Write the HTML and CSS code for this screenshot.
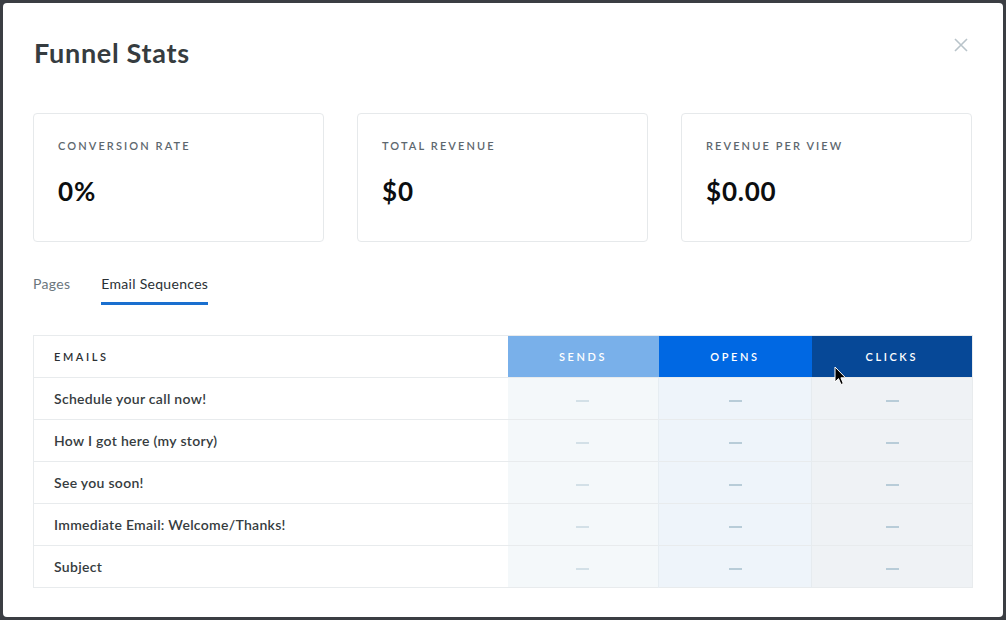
FILE: index.html
```html
<!DOCTYPE html>
<html lang="en">
  <head>
    <meta charset="utf-8">
    <title>Funnel Stats</title>
    <link rel="stylesheet" href="styles.css">
  </head>
  <body>
    <div class="modal">
      <div class="modal__header">
        <h1 class="modal__title">Funnel Stats</h1>
        <button class="modal__close" aria-label="Close">
          <svg width="14" height="14" viewBox="0 0 14 14">
            <path d="M1 1L13 13M13 1L1 13" stroke="#b9c4ca" stroke-width="1.6" fill="none"/>
          </svg>
        </button>
      </div>

      <div class="stats">
        <div class="stat">
          <p class="stat__label">Conversion Rate</p>
          <p class="stat__value">0%</p>
        </div>
        <div class="stat">
          <p class="stat__label">Total Revenue</p>
          <p class="stat__value">$0</p>
        </div>
        <div class="stat">
          <p class="stat__label">Revenue Per View</p>
          <p class="stat__value">$0.00</p>
        </div>
      </div>

      <ul class="tabs">
        <li class="tab">Pages</li>
        <li class="tab tab--active">Email Sequences</li>
      </ul>

      <table class="emails">
        <colgroup>
          <col class="col-name">
          <col class="col-sends">
          <col class="col-opens">
          <col class="col-clicks">
        </colgroup>
        <thead>
          <tr>
            <th class="th-name">Emails</th>
            <th class="th-sends">Sends</th>
            <th class="th-opens">Opens</th>
            <th class="th-clicks">Clicks</th>
          </tr>
        </thead>
        <tbody>
          <tr>
            <td class="name">Schedule your call now!</td>
            <td class="sends"><span class="dash"></span></td>
            <td class="opens"><span class="dash"></span></td>
            <td class="clicks"><span class="dash"></span></td>
          </tr>
          <tr>
            <td class="name">How I got here (my story)</td>
            <td class="sends"><span class="dash"></span></td>
            <td class="opens"><span class="dash"></span></td>
            <td class="clicks"><span class="dash"></span></td>
          </tr>
          <tr>
            <td class="name">See you soon!</td>
            <td class="sends"><span class="dash"></span></td>
            <td class="opens"><span class="dash"></span></td>
            <td class="clicks"><span class="dash"></span></td>
          </tr>
          <tr>
            <td class="name">Immediate Email: Welcome/Thanks!</td>
            <td class="sends"><span class="dash"></span></td>
            <td class="opens"><span class="dash"></span></td>
            <td class="clicks"><span class="dash"></span></td>
          </tr>
          <tr>
            <td class="name">Subject</td>
            <td class="sends"><span class="dash"></span></td>
            <td class="opens"><span class="dash"></span></td>
            <td class="clicks"><span class="dash"></span></td>
          </tr>
        </tbody>
      </table>
    </div>

    <svg class="cursor" width="13" height="20" viewBox="0 0 13 20">
      <path d="M1 1L1 16L4.5 12.6L7 18.5L9.3 17.5L6.9 11.8L11.6 11.8Z" fill="#000" stroke="#fff" stroke-width="1"/>
    </svg>
  </body>
</html>
```

FILE: styles.css
```css
html, body {
  margin: 0;
  padding: 0;
}

body {
  width: 1006px;
  height: 620px;
  padding: 3px;
  box-sizing: border-box;
  background-color: #3b3e43;
  font-family: Lato, "Open Sans", Arial, sans-serif;
  color: #33393d;
}

.modal {
  width: 1000px;
  height: 614px;
  box-sizing: border-box;
  padding: 30px 31px 0 30px;
  background-color: #fff;
  border-radius: 4px;
}

.modal__header {
  display: flex;
  justify-content: space-between;
  align-items: flex-start;
}

.modal__title {
  margin: 0;
  font-size: 27px;
  line-height: 40px;
  font-weight: 700;
  letter-spacing: 0.7px;
  color: #363c40;
  padding-left: 1px;
}

.modal__close {
  margin: 5px 4px 0 0;
  padding: 0;
  border: 0;
  background: none;
  width: 14px;
  height: 14px;
  display: flex;
}

.stats {
  display: grid;
  grid-template-columns: repeat(3, 1fr);
  gap: 33px;
  margin-top: 40px;
}

.stat {
  height: 129px;
  box-sizing: border-box;
  padding: 25px 24px 0;
  border: 1px solid #e6e9eb;
  border-radius: 4px;
}

.stat__label {
  margin: 0;
  font-size: 11px;
  line-height: 14px;
  letter-spacing: 2.1px;
  text-transform: uppercase;
  color: #5d676e;
  font-weight: 600;
}

.stat__value {
  margin: 23px 0 0;
  font-size: 26px;
  line-height: 30px;
  font-weight: 700;
  letter-spacing: 0.8px;
  color: #0c0e10;
}

.tabs {
  display: flex;
  gap: 31px;
  list-style-type: none;
  margin: 32px 0 0;
  padding: 0;
}

.tab {
  font-size: 14px;
  line-height: 20px;
  letter-spacing: 0.3px;
  padding-bottom: 8px;
  border-bottom: 3px solid transparent;
  color: #6b767d;
}

.tab--active {
  color: #2a3034;
  border-bottom-color: #1a6fcf;
}

.emails {
  width: 940px;
  margin-top: 30px;
  border-collapse: collapse;
  table-layout: fixed;
  border: 1px solid #e8ebed;
}

.col-name { width: 474px; }
.col-sends { width: 151px; }
.col-opens { width: 153px; }
.col-clicks { width: 161px; }

.emails th {
  height: 41px;
  padding: 0;
  font-size: 11px;
  font-weight: 600;
  letter-spacing: 2.6px;
  text-transform: uppercase;
  color: #fff;
  text-align: center;
}

.emails .th-name {
  text-align: left;
  padding-left: 20px;
  color: #2b3033;
  background-color: #fff;
}

.th-sends { background-color: #79b0ea; }
.th-opens { background-color: #0068e3; }
.th-clicks { background-color: #064897; }

.emails td {
  height: 41px;
  padding: 0;
  border-top: 1px solid #e8ebed;
  text-align: center;
}

.emails .name {
  text-align: left;
  padding-left: 20px;
  font-size: 14px;
  font-weight: 600;
  letter-spacing: 0.3px;
  color: #363c40;
  background-color: #fff;
}

.sends { background-color: #f4f8fa; }
.opens { background-color: #eef4fa; border-left: 1px solid #e6edf2; }
.clicks { background-color: #eff2f5; border-left: 1px solid #e6ebef; }

.dash {
  display: inline-block;
  width: 13px;
  height: 2px;
  vertical-align: middle;
  background-color: #b8ccd8;
}

.sends .dash { background-color: #d3e0e7; }

.cursor {
  position: absolute;
  left: 834px;
  top: 366px;
}
```
